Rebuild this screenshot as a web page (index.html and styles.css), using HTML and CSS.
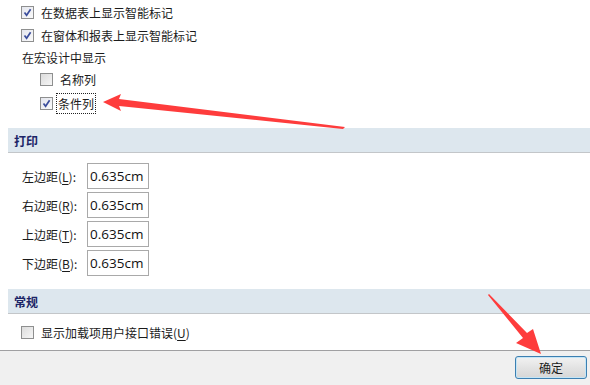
FILE: index.html
```html
<!DOCTYPE html>
<html>
<head>
<meta charset="utf-8">
<link rel="stylesheet" href="styles.css">
</head>
<body>
<div class="page">
  <div class="opts">
    <div class="row r1"><span class="cb on"><svg viewBox="0 0 11 11"><path d="M2.5 5.5 L4.6 8.3 L8.6 2.3" fill="none" stroke="#3a4d9c" stroke-width="1.7"/></svg></span><span class="txt">在数据表上显示智能标记</span></div>
    <div class="row r1"><span class="cb on"><svg viewBox="0 0 11 11"><path d="M2.5 5.5 L4.6 8.3 L8.6 2.3" fill="none" stroke="#3a4d9c" stroke-width="1.7"/></svg></span><span class="txt">在窗体和报表上显示智能标记</span></div>
    <div class="row lab">在宏设计中显示</div>
    <div class="row sub"><span class="cb"></span><span class="txt">名称列</span></div>
    <div class="row sub tall"><span class="cb on"><svg viewBox="0 0 11 11"><path d="M2.5 5.5 L4.6 8.3 L8.6 2.3" fill="none" stroke="#3a4d9c" stroke-width="1.7"/></svg></span><span class="txt focus">条件列</span></div>
  </div>
  <div class="head">打印</div>
  <div class="fields">
    <div class="field"><span class="flab">左边距(<u>L</u>):</span><span class="inp">0.635cm</span></div>
    <div class="field"><span class="flab">右边距(<u>R</u>):</span><span class="inp">0.635cm</span></div>
    <div class="field"><span class="flab">上边距(<u>T</u>):</span><span class="inp">0.635cm</span></div>
    <div class="field"><span class="flab">下边距(<u>B</u>):</span><span class="inp">0.635cm</span></div>
  </div>
  <div class="head">常规</div>
  <div class="opts2">
    <div class="row r1"><span class="cb"></span><span class="txt">显示加载项用户接口错误(<u>U</u>)</span></div>
  </div>
  <div class="bar">
    <span class="btn">确定</span>
  </div>
  <svg class="arrows" width="590" height="385" viewBox="0 0 590 385">
    <path d="M103 102 L121 94 L119 99 L345 127 L343 129 L119 106 L121 111 Z" fill="#fe3c3c"/>
    <path d="M488 295 L489 294 L527 333 L533 329 L541 354 L516 343 L523 338 Z" fill="#fe3c3c"/>
  </svg>
</div>
</body>
</html>
```
FILE: styles.css
```css
* { box-sizing: border-box; }
html, body { margin: 0; padding: 0; background: #fff; }
body {
  font-family: "Noto Sans CJK SC", "Noto Sans", sans-serif;
  font-size: 12px;
  color: #1b1b1b;
}
.page { position: relative; width: 590px; height: 385px; overflow: hidden; display: flex; flex-direction: column; }
.opts { padding: 1px 0 0 21px; }
.row { display: flex; align-items: center; height: 23px; }
.row.lab { height: 21px; padding-left: 1px; }
.row.sub { padding-left: 19px; }
.row.sub.tall { height: 24px; }
.cb {
  width: 13px; height: 13px;
  border: 1px solid #8e8f8f;
  background: linear-gradient(135deg, #dcdcdc, #f6f6f6);
  display: flex; align-items: center; justify-content: center;
  flex: none;
}
.cb.on { background: linear-gradient(135deg, #e4e6ee, #fafafa); }
.cb svg { width: 11px; height: 11px; display: block; }
.txt { margin-left: 7px; line-height: 17px; }
.sub .txt { margin-left: 7px; }
.txt.focus { outline: 1px dotted #222; outline-offset: 0; padding: 0 1px; margin-left: 4px; height: 19px; display: flex; align-items: center; }
.head {
  margin: 13px 0 0 8px;
  height: 25px;
  background: #dde7ee;
  border-bottom: 1px solid #c3c6c9;
  font-weight: bold;
  color: #1c2567;
  padding-left: 6px;
  display: flex; align-items: center;
  font-size: 12px;
}
.fields { padding: 10px 0 0 22px; display: flex; flex-direction: column; gap: 3px; }
.field { display: flex; align-items: center; height: 26px; }
.flab { width: 65px; }
.flab u { text-decoration: underline; text-underline-offset: 2px; }
.inp {
  width: 62px; height: 26px;
  border: 1px solid #a9a9a9;
  padding-left: 2px;
  font-family: "Open Sans", "Noto Sans", sans-serif;
  font-size: 13.5px;
  display: flex; align-items: center;
  color: #111;
}
.opts2 { padding: 7px 0 0 21px; height: 36px; }
.opts2 u { text-underline-offset: 2px; }
.bar {
  flex: 1;
  background: #f0f0f0;
  border-top: 1px solid #a0a0a2;
  display: flex; justify-content: flex-end; align-items: flex-start;
  padding: 5px 3px 0 0;
}
.btn {
  width: 72px; height: 23px;
  border: 1px solid #3c7fb1;
  border-radius: 3px;
  background: linear-gradient(#f2f2f2, #e3e3e3 50%, #d6d6d6);
  box-shadow: inset 0 0 0 1px #c4e5f6;
  display: flex; align-items: center; justify-content: center;
  font-size: 12px;
}
.arrows { position: absolute; left: 0; top: 0; pointer-events: none; }
```
